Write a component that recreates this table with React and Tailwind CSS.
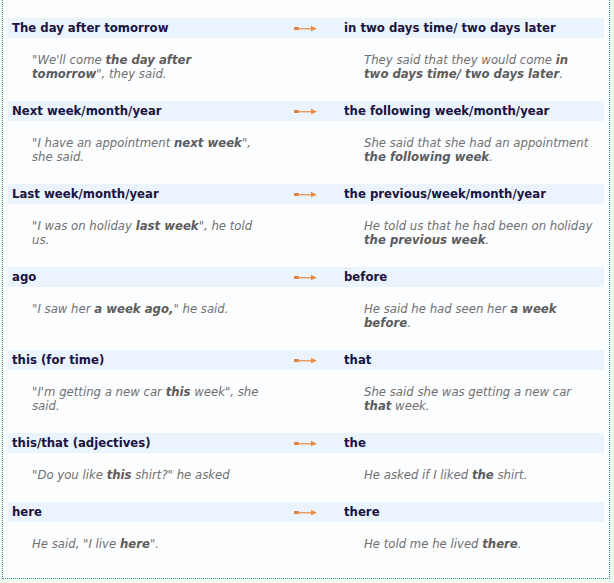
import React from "react";

const rows = [
  {
    from: "The day after tomorrow",
    to: "in two days time/ two days later",
    left: [
      ['"We\'ll come ', ["the day after"]],
      [["tomorrow"], '", they said.'],
    ],
    right: [
      ["They said that they would come ", ["in"]],
      [["two days time/ two days later"], "."],
    ],
  },
  {
    from: "Next week/month/year",
    to: "the following week/month/year",
    left: [['"I have an appointment ', ["next week"], '",'], ["she said."]],
    right: [
      ["She said that she had an appointment"],
      [["the following week"], "."],
    ],
  },
  {
    from: "Last week/month/year",
    to: "the previous/week/month/year",
    left: [['"I was on holiday ', ["last week"], '", he told'], ["us."]],
    right: [
      ["He told us that he had been on holiday"],
      [["the previous week"], "."],
    ],
  },
  {
    from: "ago",
    to: "before",
    left: [['"I saw her ', ["a week ago,"], '" he said.']],
    right: [["He said he had seen her ", ["a week"]], [["before"], "."]],
  },
  {
    from: "this (for time)",
    to: "that",
    left: [['"I\'m getting a new car ', ["this"], ' week", she'], ["said."]],
    right: [["She said she was getting a new car"], [["that"], " week."]],
  },
  {
    from: "this/that (adjectives)",
    to: "the",
    left: [['"Do you like ', ["this"], ' shirt?" he asked']],
    right: [["He asked if I liked ", ["the"], " shirt."]],
  },
  {
    from: "here",
    to: "there",
    left: [['He said, "I live ', ["here"], '".']],
    right: [["He told me he lived ", ["there"], "."]],
  },
];

function Arrow() {
  return (
    <svg width="24" height="7" viewBox="0 0 24 7">
      <rect x="0" y="2" width="5" height="3" fill="#d9874a" />
      <rect x="4" y="3" width="15" height="1.4" fill="#ee9a55" />
      <path d="M17 0.8 L23 3.7 L17 6.2 Z" fill="#e88c45" />
    </svg>
  );
}

function Example({ lines }) {
  return (
    <div className="pl-6 pt-[15px] pb-5 text-[13px] leading-[14px] italic text-[#707070]">
      {lines.map((line, i) => (
        <div key={i} className="whitespace-pre">
          {line.map((part, j) =>
            Array.isArray(part) ? (
              <b key={j} className="font-bold text-[#5c5c5c]">
                {part[0]}
              </b>
            ) : (
              <span key={j}>{part}</span>
            )
          )}
        </div>
      ))}
    </div>
  );
}

export default function App() {
  return (
    <div
      className="min-h-[583px] bg-[#eefaee] pl-[2px] pr-[4px] pb-[4px]"
      style={{ fontFamily: '"DejaVu Sans Condensed", "DejaVu Sans", Tahoma, sans-serif', fontStretch: "condensed" }}
    >
      <div className="border-l border-r border-b border-dotted border-[#3b8f95] bg-[#fcfdff] pl-[5px] pr-[5px] pt-[18px] pb-[7px]">
        {rows.map((r, i) => (
          <div key={i}>
            <div className="flex h-5 items-center bg-[#ebf4fd] text-[13px] font-bold text-[#1b1340]">
              <div className="w-[282px] pl-1">{r.from}</div>
              <div className="flex w-[50px] items-center pl-[4px]">
                <Arrow />
              </div>
              <div className="flex-1 pl-1">{r.to}</div>
            </div>
            <div className="flex">
              <div className="w-[332px]">
                <Example lines={r.left} />
              </div>
              <div className="flex-1">
                <Example lines={r.right} />
              </div>
            </div>
          </div>
        ))}
      </div>
    </div>
  );
}
